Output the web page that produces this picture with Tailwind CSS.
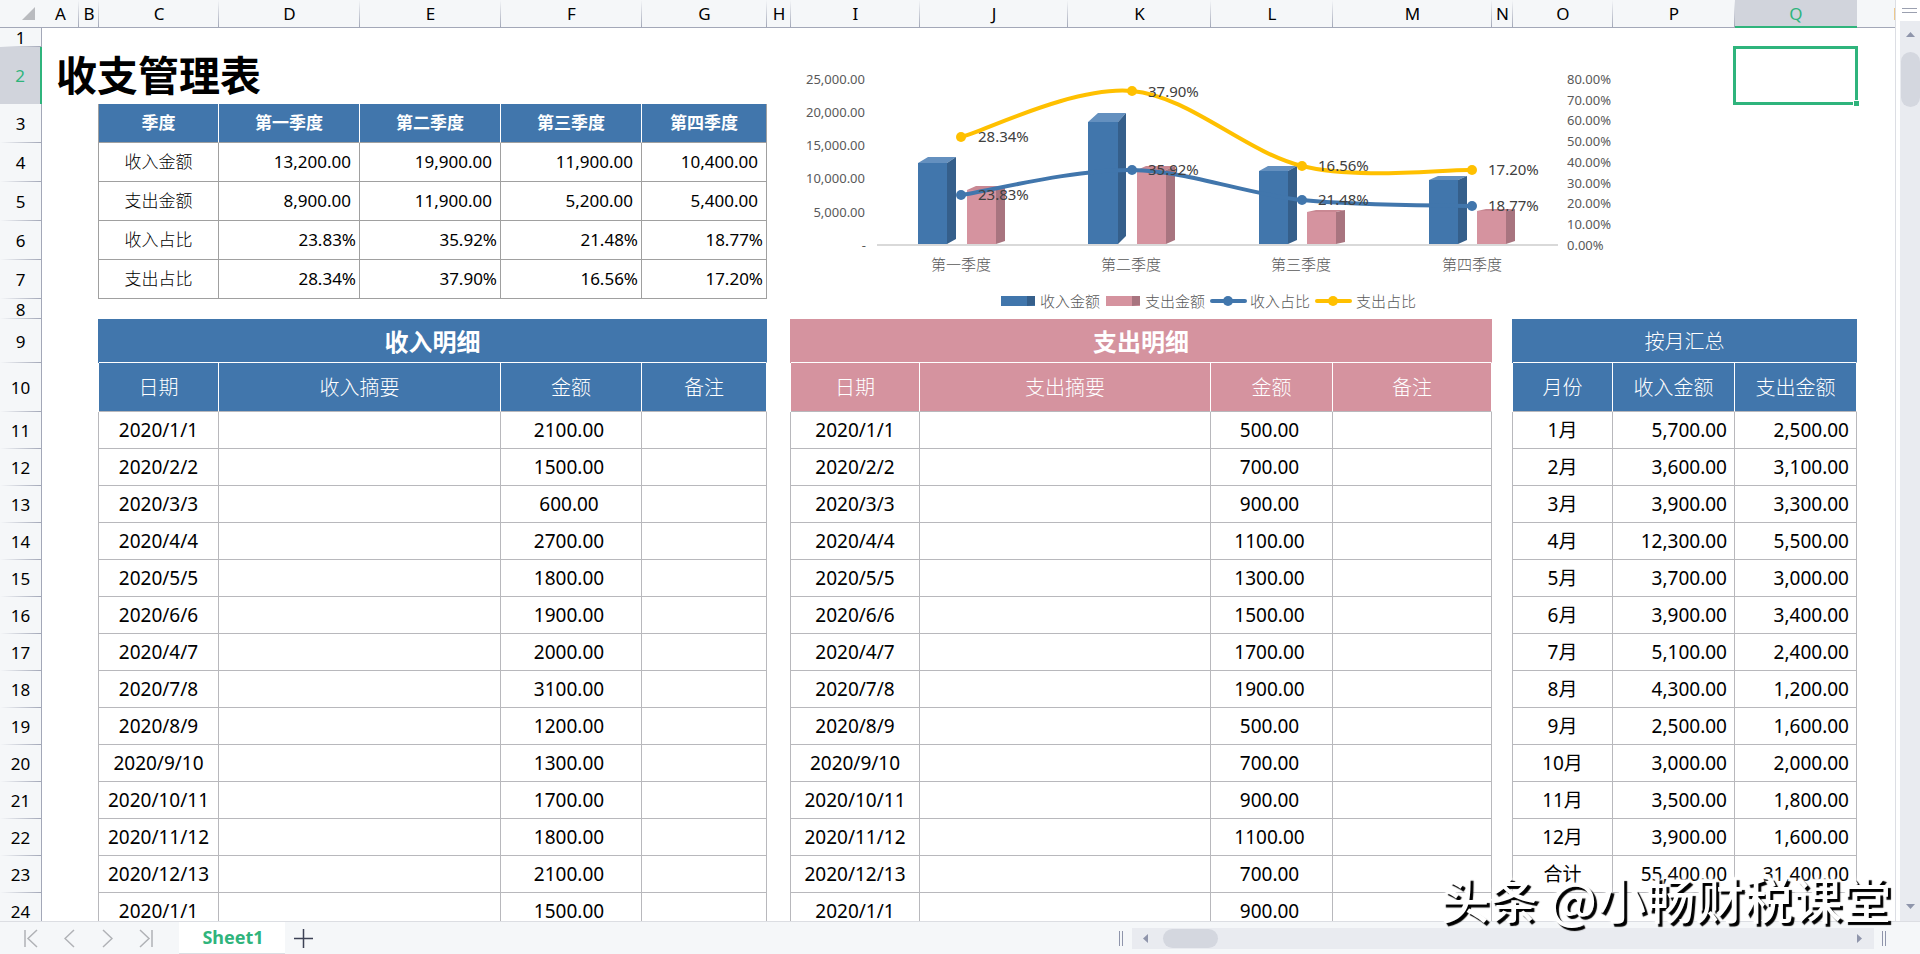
<!DOCTYPE html>
<html lang="zh-CN">
<head>
    <meta charset="UTF-8">
    <meta name="viewport" content="width=device-width, initial-scale=1.0">
    <title>收支管理表</title>
    <script src="https://cdn.jsdelivr.net/npm/@tailwindcss/browser@4"></script>
</head>
<body class="h-screen flex flex-col overflow-hidden bg-white text-black font-['Noto_Sans','Noto_Sans_CJK_SC',sans-serif]">
    <main class="relative flex-1 min-h-0 flex">
        <div class="flex-1 min-w-0 overflow-hidden border-r border-[#dcdee4]">
            <table class="w-full min-w-[1940px] table-fixed border-separate border-spacing-0 text-[17px] leading-none">
                <colgroup>
                    <col class="w-[42px]"><col class="w-[37px]"><col class="w-[20px]"><col class="w-[120px]">
                    <col class="w-[141px]"><col class="w-[141px]"><col class="w-[141px]"><col class="w-[125px]">
                    <col class="w-[24px]"><col class="w-[129px]"><col class="w-[148px]"><col class="w-[143px]">
                    <col class="w-[122px]"><col class="w-[159px]"><col class="w-[21px]"><col class="w-[100px]">
                    <col class="w-[122px]"><col class="w-[122px]"><col>
                </colgroup>
                <thead>
                    <tr id="letters" class="h-[28px]">
                        <th class="bg-[#f5f7f9] border-b border-[#a3a8b8] p-0" aria-label="全选">
                            <svg class="ml-[22px] w-[13px] h-[13px]" viewBox="0 0 13 13"><path d="M13 0V13H0Z" fill="#b9bbbf"/></svg>
                        </th>
                    </tr>
                </thead>
                <tbody id="sheet">
                    <tr class="h-[19px]">
                        <td colspan="8"></td>
                        <td colspan="8" rowspan="8" class="p-0 align-top">
                            <svg class="block w-[943px] h-[290px]" viewBox="791 28 943 290" role="img" aria-label="季度收支图表">
                                <g fill="#595959" font-size="13" text-anchor="end">
                                    <text x="865" y="84">25,000.00</text>
                                    <text x="865" y="117">20,000.00</text>
                                    <text x="865" y="150">15,000.00</text>
                                    <text x="865" y="183">10,000.00</text>
                                    <text x="865" y="217">5,000.00</text>
                                    <text x="866" y="250">-</text>
                                </g>
                                <g fill="#595959" font-size="13">
                                    <text x="1567" y="84">80.00%</text>
                                    <text x="1567" y="105">70.00%</text>
                                    <text x="1567" y="125">60.00%</text>
                                    <text x="1567" y="146">50.00%</text>
                                    <text x="1567" y="167">40.00%</text>
                                    <text x="1567" y="188">30.00%</text>
                                    <text x="1567" y="208">20.00%</text>
                                    <text x="1567" y="229">10.00%</text>
                                    <text x="1567" y="250">0.00%</text>
                                </g>
                                <path d="M877 245H1558" stroke="#d9d9d9" stroke-width="2"/>
                                <!-- income bars: front, top, side -->
                                <g fill="#4176ac">
                                    <path d="M918 163H947V244H918ZM1088 122H1118V244H1088ZM1259 171H1288V244H1259ZM1429 180H1458V244H1429Z"/>
                                    <path fill="#6490bf" d="M918 163L928 157H956L947 163ZM1088 122L1098 113H1126L1118 122ZM1259 171L1268 166H1297L1288 171ZM1429 180L1438 176H1467L1458 180Z"/>
                                    <path fill="#355f8b" d="M947 163L956 157V239L947 244ZM1118 122L1126 113V236L1118 244ZM1288 171L1297 166V240L1288 244ZM1458 180L1467 176V240L1458 244Z"/>
                                </g>
                                <!-- expense bars -->
                                <g fill="#d5939f">
                                    <path d="M967 190H996V244H967ZM1137 170H1166V244H1137ZM1307 212H1336V244H1307ZM1477 211H1506V244H1477Z"/>
                                    <path fill="#c98893" d="M967 190L976 186H1005L996 190ZM1137 170L1146 166H1175L1166 170ZM1307 212L1316 210H1345L1336 212ZM1477 211L1486 209H1515L1506 211Z"/>
                                    <path fill="#a8747f" d="M996 190L1005 186V241L996 244ZM1166 170L1175 166V240L1166 244ZM1336 212L1345 210V242L1336 244ZM1506 211L1515 209V241L1506 244Z"/>
                                </g>
                                <path d="M961 195C989 191 1075 169 1132 170S1245 194 1302 200S1444 205 1472 206" fill="none" stroke="#4176ac" stroke-width="4"/>
                                <path d="M961 137C989 129 1075 86 1132 91S1245 152 1302 166S1444 169 1472 170" fill="none" stroke="#ffc000" stroke-width="4"/>
                                <g fill="#4176ac">
                                    <circle cx="961" cy="195" r="5"/><circle cx="1132" cy="170" r="5"/><circle cx="1302" cy="200" r="5"/><circle cx="1472" cy="206" r="5"/>
                                </g>
                                <g fill="#ffc000">
                                    <circle cx="961" cy="137" r="5"/><circle cx="1132" cy="91" r="5"/><circle cx="1302" cy="166" r="5"/><circle cx="1472" cy="170" r="5"/>
                                </g>
                                <g fill="#404040" font-size="15">
                                    <text x="978" y="142">28.34%</text><text x="978" y="200">23.83%</text>
                                    <text x="1148" y="97">37.90%</text><text x="1148" y="175">35.92%</text>
                                    <text x="1318" y="171">16.56%</text><text x="1318" y="205">21.48%</text>
                                    <text x="1488" y="175">17.20%</text><text x="1488" y="211">18.77%</text>
                                </g>
                                <g class="font-light" fill="#595959" font-size="15" text-anchor="middle">
                                    <text x="961" y="270">第一季度</text><text x="1131" y="270">第二季度</text>
                                    <text x="1301" y="270">第三季度</text><text x="1472" y="270">第四季度</text>
                                </g>
                                <!-- legend -->
                                <path d="M1001 296H1035V306H1001Z" fill="#4176ac"/><path d="M1027 296H1035V305L1027 306Z" fill="#355f8b"/>
                                <path d="M1106 296H1140V306H1106Z" fill="#d5939f"/><path d="M1132 296H1140V305L1132 306Z" fill="#a8747f"/>
                                <path d="M1212 301H1245" stroke="#4176ac" stroke-width="4" stroke-linecap="round"/><circle cx="1228" cy="301" r="5" fill="#4176ac"/>
                                <path d="M1317 301H1350" stroke="#ffc000" stroke-width="4" stroke-linecap="round"/><circle cx="1333" cy="301" r="5" fill="#ffc000"/>
                                <g class="font-light" fill="#595959" font-size="15">
                                    <text x="1040" y="307">收入金额</text><text x="1145" y="307">支出金额</text>
                                    <text x="1250" y="307">收入占比</text><text x="1356" y="307">支出占比</text>
                                </g>
                            </svg>
                        </td>
                        <td colspan="2"></td>
                    </tr>
                    <tr class="h-[57px]">
                        <td colspan="8" class="p-0 pl-[14px]"><h1 class="text-[41px] leading-none font-bold">收支管理表</h1></td>
                        <td class="relative p-0">
                            <div class="absolute -top-px -bottom-px -left-[2px] -right-px border-3 border-[#2fb47c]"></div>
                            <div class="absolute -bottom-[2px] -right-[2px] size-[6px] border-t border-l border-white bg-[#2fb47c]"></div>
                        </td>
                        <td></td>
                    </tr>
                </tbody>
            </table>
        </div>

        <!-- vertical scrollbar -->
        <div class="w-6 flex flex-col items-end bg-white">
            <div class="w-5 h-[21px] pl-[2px] pr-[3px] flex flex-col justify-center gap-[3px]">
                <div class="h-px bg-[#9ba0b0]"></div>
                <div class="h-px bg-[#9ba0b0]"></div>
            </div>
            <div class="w-5 flex-1 flex flex-col items-center bg-[#e9ebf0]">
                <button class="h-[31px] w-full flex items-center justify-center pb-1" aria-label="向上滚动">
                    <svg class="w-[9px] h-[5px]" viewBox="0 0 9 5"><path d="M4.500 0L9 5H0Z" fill="#8f95ab"/></svg>
                </button>
                <div class="w-[19px] h-[55px] rounded-full bg-[#d4d7df]"></div>
                <button class="mt-auto h-[29px] w-full flex items-center justify-center" aria-label="向下滚动">
                    <svg class="w-[9px] h-[5px]" viewBox="0 0 9 5"><path d="M0 0H9L4.500 5Z" fill="#8f95ab"/></svg>
                </button>
            </div>
        </div>

        <div class="absolute right-[29px] -bottom-[3px] z-10 whitespace-nowrap text-[49px] leading-[52px] font-medium text-white font-['Noto_Sans_CJK_SC',sans-serif] [text-shadow:3px_3px_1px_#000,0_0_4px_#fff]">头条 @小畅财税课堂</div>
    </main>

    <footer class="h-[33px] flex items-center border-t border-[#dcdee3] bg-[#f5f7f9]">
        <div class="w-[179px] pl-6 pr-[26px] flex items-center justify-between text-[#b0b2b6]">
            <button aria-label="第一张"><svg class="w-[14px] h-[19px]" viewBox="0 0 14 19" fill="none" stroke="currentColor" stroke-width="1.500"><path d="M1 1V18M13 1L4 9.500L13 18"/></svg></button>
            <button aria-label="上一张"><svg class="w-[11px] h-[19px]" viewBox="0 0 11 19" fill="none" stroke="currentColor" stroke-width="1.500"><path d="M10 1L1 9.500L10 18"/></svg></button>
            <button aria-label="下一张"><svg class="w-[11px] h-[19px]" viewBox="0 0 11 19" fill="none" stroke="currentColor" stroke-width="1.500"><path d="M1 1L10 9.500L1 18"/></svg></button>
            <button aria-label="最后一张"><svg class="w-[14px] h-[19px]" viewBox="0 0 14 19" fill="none" stroke="currentColor" stroke-width="1.500"><path d="M13 1V18M1 1L10 9.500L1 18"/></svg></button>
        </div>
        <button class="w-[106px] h-full bg-white border-b border-[#dcdee3] pl-[2px] text-[18px] font-bold text-[#2fb47c]">Sheet1</button>
        <button class="ml-2 p-px" aria-label="新建工作表"><svg class="w-[19px] h-[19px]" viewBox="0 0 19 19" stroke="#3d4256" stroke-width="1.500"><path d="M9.500 0V19M0 9.500H19"/></svg></button>
        <div class="ml-auto w-1 h-[15px] border-x border-[#8f95ab]"></div>
        <div class="ml-[9px] w-[742px] h-[21px] flex items-center bg-[#e9ebf0]">
            <button class="w-[31px] h-full flex items-center justify-center pr-1" aria-label="向左滚动"><svg class="w-[5px] h-[9px]" viewBox="0 0 5 9"><path d="M5 0V9L0 4.500Z" fill="#8f95ab"/></svg></button>
            <div class="w-[55px] h-[19px] rounded-full bg-[#d4d7df]"></div>
            <button class="ml-auto w-[29px] h-full flex items-center justify-center" aria-label="向右滚动"><svg class="w-[5px] h-[9px]" viewBox="0 0 5 9"><path d="M0 0L5 4.500L0 9Z" fill="#8f95ab"/></svg></button>
        </div>
        <div class="ml-2 mr-[34px] w-1 h-[15px] border-x border-[#8f95ab]"></div>
    </footer>

    <script>
        const quarters = [
            ['季度', '第一季度', '第二季度', '第三季度', '第四季度'],
            ['收入金额', '13,200.00', '19,900.00', '11,900.00', '10,400.00'],
            ['支出金额', '8,900.00', '11,900.00', '5,200.00', '5,400.00'],
            ['收入占比', '23.83%', '35.92%', '21.48%', '18.77%'],
            ['支出占比', '28.34%', '37.90%', '16.56%', '17.20%'],
        ];

        // date, income, expense, month, monthly income, monthly expense
        const details = [
            ['2020/1/1', '2100.00', '500.00', '1月', '5,700.00', '2,500.00'],
            ['2020/2/2', '1500.00', '700.00', '2月', '3,600.00', '3,100.00'],
            ['2020/3/3', '600.00', '900.00', '3月', '3,900.00', '3,300.00'],
            ['2020/4/4', '2700.00', '1100.00', '4月', '12,300.00', '5,500.00'],
            ['2020/5/5', '1800.00', '1300.00', '5月', '3,700.00', '3,000.00'],
            ['2020/6/6', '1900.00', '1500.00', '6月', '3,900.00', '3,400.00'],
            ['2020/4/7', '2000.00', '1700.00', '7月', '5,100.00', '2,400.00'],
            ['2020/7/8', '3100.00', '1900.00', '8月', '4,300.00', '1,200.00'],
            ['2020/8/9', '1200.00', '500.00', '9月', '2,500.00', '1,600.00'],
            ['2020/9/10', '1300.00', '700.00', '10月', '3,000.00', '2,000.00'],
            ['2020/10/11', '1700.00', '900.00', '11月', '3,500.00', '1,800.00'],
            ['2020/11/12', '1800.00', '1100.00', '12月', '3,900.00', '1,600.00'],
            ['2020/12/13', '2100.00', '700.00', '合计', '55,400.00', '31,400.00'],
            ['2020/1/1', '1500.00', '900.00', '', '', ''],
        ];

        const letters = document.getElementById('letters');
        const sheet = document.getElementById('sheet');

        'ABCDEFGHIJKLMNOPQR'.split('').forEach(letter => {
            const look = letter === 'Q'
                ? 'bg-[#d1d4dc] text-[#2fb47c] border-b-2 border-[#2fb47c]'
                : 'bg-[#f5f7f9] bg-[linear-gradient(to_bottom,#f5f7f9,#a3a8b8)] bg-[length:1px_100%] bg-right bg-no-repeat border-b border-[#a3a8b8]';
            letters.insertAdjacentHTML('beforeend', `<th class="p-0 font-normal ${look}">${letter}</th>`);
        });

        const td = (text, look, span = 1) => `<td colspan="${span}" class="p-0 border-b border-r ${look}">${text}</td>`;
        const gap = (span, look = 'border-transparent') => `<td colspan="${span}" class="p-0 border-r ${look}"></td>`;

        quarters.forEach((row, i) => {
            const cells = row.map((text, j) => {
                if (i === 0) return td(text, `pb-[2px] bg-[#4176ac] text-white text-center font-bold border-b-[#a0a0a0] ${j === 4 ? 'border-r-[#a0a0a0]' : 'border-r-white'}`);
                if (j === 0) return td(text, 'pb-[2px] text-center font-light border-[#a0a0a0]');
                return td(text, `pb-[2px] text-right border-[#a0a0a0] ${i < 3 ? 'pr-2' : 'pr-[3px]'}`);
            }).join('');
            sheet.insertAdjacentHTML('beforeend', `<tr class="h-[39px]">${gap(2, 'border-[#a0a0a0]')}${cells}${gap(1)}${gap(2)}</tr>`);
        });

        sheet.insertAdjacentHTML('beforeend', `<tr class="h-[20px]">${gap(8)}${gap(2)}</tr>`);

        const blue = 'bg-[#4176ac] text-white text-center';
        const pink = 'bg-[#d5939f] text-white text-center';
        sheet.insertAdjacentHTML('beforeend', `<tr class="h-[44px]">
            ${gap(2, 'border-[#4176ac]')}${td('收入明细', blue + ' pt-[2px] text-[24px] font-bold border-b-white border-r-[#4176ac]', 5)}
            ${gap(1, 'border-[#d5939f]')}${td('支出明细', pink + ' pt-[2px] text-[24px] font-bold border-b-white border-r-[#d5939f]', 5)}
            ${gap(1, 'border-[#4176ac]')}${td('按月汇总', blue + ' pt-[2px] text-[20px] font-light border-b-white border-r-[#4176ac]', 3)}${gap(1)}
        </tr>`);

        const head = (text, color, span) => td(text, color + ' pt-[2px] text-[20px] font-light border-r-white border-b-[#b8b8bc]', span);
        sheet.insertAdjacentHTML('beforeend', `<tr class="h-[49px]">
            ${gap(2)}${head('日期', blue)}${head('收入摘要', blue, 2)}${head('金额', blue)}${head('备注', blue)}
            ${gap(1)}${head('日期', pink)}${head('支出摘要', pink, 2)}${head('金额', pink)}${head('备注', pink)}
            ${gap(1)}${head('月份', blue)}${head('收入金额', blue)}${head('支出金额', blue)}${gap(1)}
        </tr>`);

        const line = 'border-[#b8b8bc]';
        details.forEach(([date, income, expense, month, monthIn, monthOut]) => {
            const mid = `${line} text-center`;
            const amount = `${line} text-center pr-1`;
            const right = `${line} text-right pr-[7px]`;
            const summary = month
                ? gap(1, line) + td(month, mid) + td(monthIn, right) + td(monthOut, right)
                : gap(4);
            sheet.insertAdjacentHTML('beforeend', `<tr class="h-[37px] text-[19px]">
                ${gap(2, line)}${td(date, mid)}${td('', line, 2)}${td(income, amount)}${td('', line)}
                ${gap(1, line)}${td(date, mid)}${td('', line, 2)}${td(expense, amount)}${td('', line)}
                ${summary}${gap(1)}
            </tr>`);
        });

        // row numbers down the left edge
        [...sheet.rows].forEach((tr, i) => {
            const look = i === 1
                ? 'bg-[#d1d4dc] text-[#2fb47c] border-r-2 border-[#2fb47c]'
                : 'bg-[#f5f7f9] bg-[linear-gradient(to_right,#f5f7f9,#a3a8b8)] bg-[length:100%_1px] bg-bottom bg-no-repeat border-r border-[#a3a8b8]';
            tr.insertAdjacentHTML('afterbegin', `<th class="p-0 font-normal text-[17px] ${look}">${i + 1}</th>`);
        });
    </script>
</body>
</html>
